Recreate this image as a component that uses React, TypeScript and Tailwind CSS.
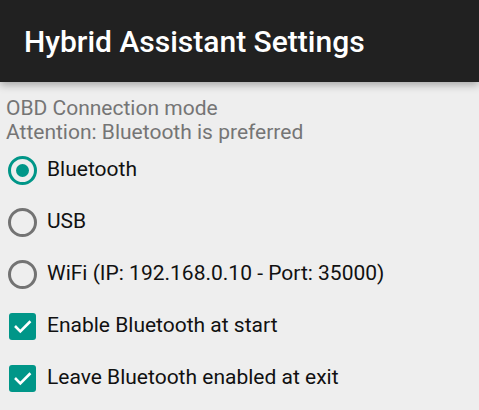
const radios = [
  { label: "Bluetooth", checked: true },
  { label: "USB", checked: false },
  { label: "WiFi (IP: 192.168.0.10 - Port: 35000)", checked: false },
];

const checks = ["Enable Bluetooth at start", "Leave Bluetooth enabled at exit"];

function Radio({ checked }: { checked: boolean }) {
  return (
    <span
      className={`flex h-[29px] w-[29px] items-center justify-center rounded-full border-[3px] ${
        checked ? "border-[#009688]" : "border-[#737373]"
      }`}
    >
      {checked && <span className="h-[13px] w-[13px] rounded-full bg-[#009688]" />}
    </span>
  );
}

function Check() {
  return (
    <span className="flex h-[27px] w-[27px] items-center justify-center rounded-[3px] bg-[#009688]">
      <svg width="21" height="21" viewBox="0 0 24 24" fill="none">
        <path d="M4.5 12.5l5 5L20 7" stroke="white" strokeWidth="3" strokeLinecap="square" />
      </svg>
    </span>
  );
}

export default function App() {
  return (
    <div className="min-h-[410px] bg-[#eeeeee] font-['Roboto',sans-serif]">
      <header className="relative z-10 flex h-[82px] items-center bg-[#212121] pl-6 shadow-[0_3px_8px_rgba(0,0,0,0.3)]">
        <h1 className="text-[30px] font-medium text-white">Hybrid Assistant Settings</h1>
      </header>

      <div className="px-[6px] pt-[14px] text-[21px] leading-[24px] text-[#757575]">
        <p>OBD Connection mode</p>
        <p>Attention: Bluetooth is preferred</p>
      </div>

      <div className="flex flex-col">
        {radios.map((r) => (
          <label key={r.label} className="flex h-[52px] items-center gap-[10px] pl-[8px]">
            <Radio checked={r.checked} />
            <span className="text-[21px] text-[#111]">{r.label}</span>
          </label>
        ))}
        {checks.map((c) => (
          <label key={c} className="flex h-[52px] items-center gap-[11px] pl-[9px]">
            <Check />
            <span className="text-[21px] text-[#111]">{c}</span>
          </label>
        ))}
      </div>
    </div>
  );
}
